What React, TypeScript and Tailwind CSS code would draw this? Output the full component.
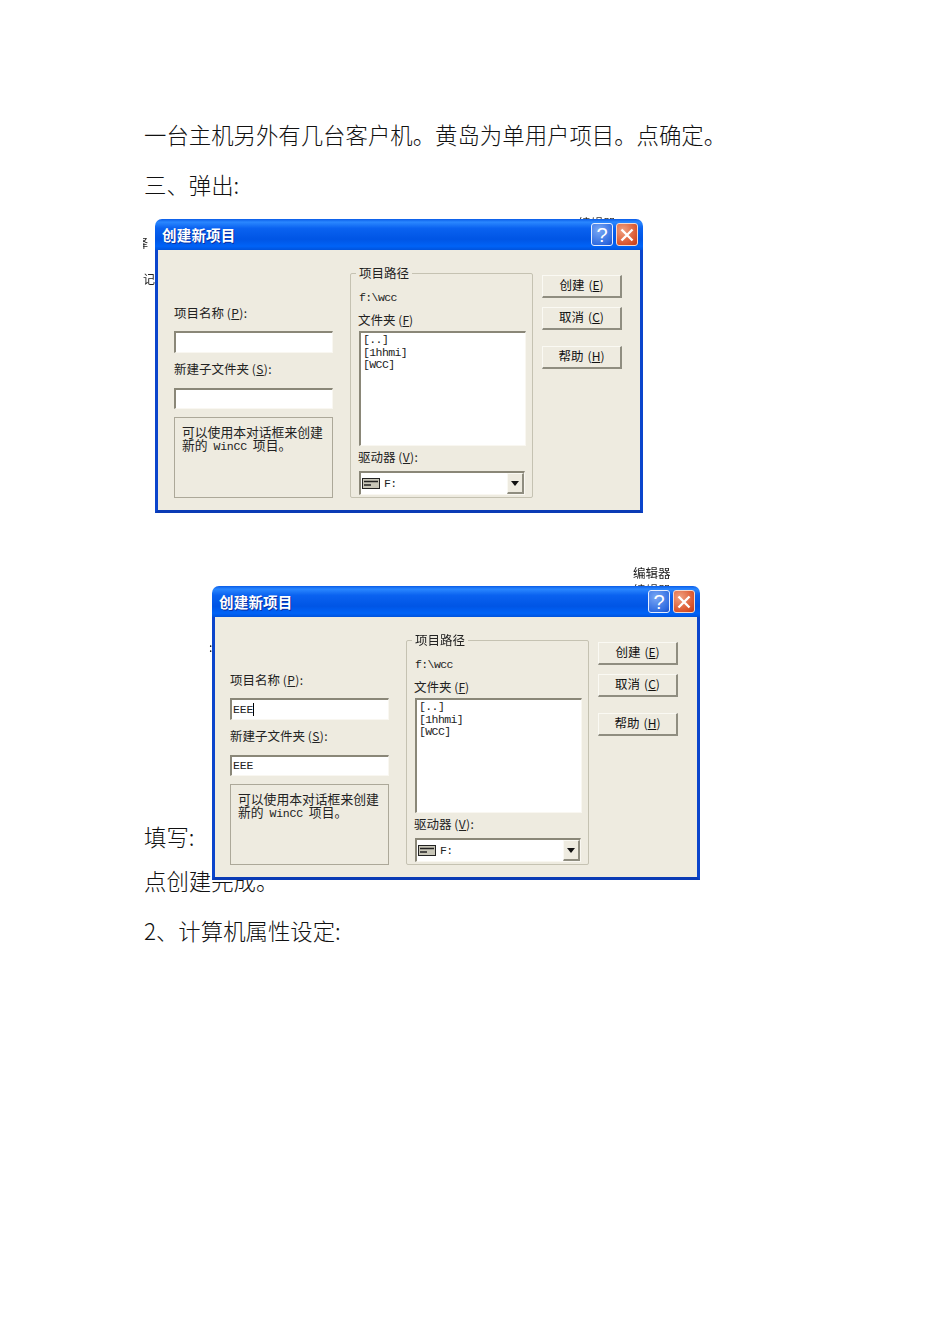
const sans = "font-['Noto_Sans_CJK_SC',sans-serif]";

function Sunken({ className = "", children }: { className?: string; children?: React.ReactNode }) {
  return (
    <div className={`border-t-2 border-l-2 border-r border-b border-t-[#8a8778] border-l-[#8a8778] border-r-[#f9f7f1] border-b-[#f9f7f1] bg-white ${className}`}>
      {children}
    </div>
  );
}

function Btn({ label, k, className = "" }: { label: string; k: string; className?: string }) {
  return (
    <div className={`h-[23px] w-[80px] pb-[2px] flex items-center justify-center gap-[4px] bg-[#eeebe0] border-t border-l border-t-[#faf9f3] border-l-[#faf9f3] border-r-2 border-b-2 border-r-[#8f8d80] border-b-[#8f8d80] text-[12.5px] text-[#111] ${className}`}>
      <span>{label}</span>
      <span className="text-[12px]">(<u>{k}</u>)</span>
    </div>
  );
}

function Label({ children, className = "" }: { children: React.ReactNode; className?: string }) {
  return <div className={`h-[18px] leading-[18px] text-[12.5px] text-[#222] whitespace-nowrap ${className}`}>{children}</div>;
}

function Dialog({ value, second }: { value?: string; second?: boolean }) {
  const mono = "font-['Liberation_Mono',monospace] text-[11.5px] tracking-[-0.6px]";
  return (
    <div className={`relative w-[488px] h-[294px] flex flex-col ${sans}`}>
      {second ? (
        <>
          <span className="absolute left-[421px] top-[-21px] text-[12.5px] leading-[16px] text-[#222] whitespace-nowrap">编辑器</span>
          <span className="absolute left-[421px] top-[-3px] h-[3px] overflow-hidden text-[12.5px] leading-[14px] text-[#333] whitespace-nowrap">编辑器</span>
          <span className="absolute left-[-3px] top-[54px] text-[12px] leading-[14px] w-[3px] overflow-hidden text-black">:</span>
        </>
      ) : (
        <>
          <span className="absolute left-[423px] top-[-2px] h-[2px] overflow-hidden text-[12.5px] leading-[12px] text-[#333] whitespace-nowrap">编辑器</span>
          <span className="absolute left-[-12px] top-[16px] w-[5px] h-[15px] overflow-hidden text-[12px] leading-[15px] text-[#222] flex justify-end">择</span>
          <span className="absolute left-[-12px] top-[52px] w-[12px] h-[15px] overflow-hidden text-[12px] leading-[15px] text-[#222]">记</span>
        </>
      )}
      <div className="h-[31px] shrink-0 rounded-t-[7px] bg-[linear-gradient(180deg,#0a5ce8_0%,#2a87ff_10%,#0a62f0_30%,#0055e5_65%,#0063f7_88%,#0053dc_100%)] flex items-center pl-[7px] pr-[5px]">
        <span className="text-white text-[14.5px] font-bold tracking-[0.2px] [text-shadow:1px_1px_0_#0a2fa0]">创建新项目</span>
        <div className="ml-auto flex gap-[3px]">
          <div className="w-[22px] h-[23px] rounded-[3px] border border-[#e6eeff] bg-[radial-gradient(circle_at_35%_30%,#7aa8f5,#2f6be0_75%,#1d4fc8)] flex items-center justify-center text-white text-[20px] font-['Liberation_Sans',sans-serif]">?</div>
          <div className="w-[22px] h-[23px] rounded-[3px] border border-[#f3d9cf] bg-[radial-gradient(circle_at_30%_30%,#f0a080,#dc5a32_65%,#c23a18)] flex items-center justify-center">
            <svg width="16" height="16" viewBox="0 0 16 16"><path d="M2.5 2.5 L13.5 13.5 M13.5 2.5 L2.5 13.5" stroke="#fff" strokeWidth="2.4" /></svg>
          </div>
        </div>
      </div>
      <div className={`flex-1 flex bg-[#eeebe0] border-x-[3px] border-b-[3px] border-[#0b45cc] border-b-[#0a3bb5] ${second ? "pl-[15px]" : "pl-[16px]"}`}>
        <div className="w-[159px] pt-[54px] flex flex-col">
          <Label>项目名称 <span className="text-[12px] tracking-[0.4px]">(<u>P</u>):</span></Label>
          <Sunken className={`mt-[9px] h-[22px] pl-[1px] flex items-center ${mono}`}>
            {value && <span className="text-[#222] tracking-[-0.2px]">{value}</span>}
            {value && <span className="w-px h-[13px] bg-black" />}
          </Sunken>
          <Label className="mt-[7px]">新建子文件夹 <span className="text-[12px] tracking-[0.4px]">(<u>S</u>):</span></Label>
          <Sunken className={`mt-[10px] h-[21px] pl-[1px] flex items-center ${mono}`}>
            {value && <span className="text-[#222] tracking-[-0.2px]">{value}</span>}
          </Sunken>
          <div className="mt-[8px] h-[81px] border border-[#aca899] pl-[7px] pr-[2px] pt-[7px] text-[12.8px] leading-[13px] text-[#222] whitespace-nowrap">
            可以使用本对话框来创建<br />新的 <span className="mx-[3px] font-['Liberation_Mono',monospace] text-[11.5px] tracking-[-0.2px]">WinCC</span> 项目。
          </div>
        </div>
        <div className="relative ml-[17px] mt-[23px] w-[183px] h-[225px] border border-[#c5c2b2] rounded-[2px] px-[8px] pt-[16px]">
          <span className="absolute left-[5px] top-[-9px] bg-[#eeebe0] px-[3px] text-[12.5px] leading-[16px] text-[#222]">项目路径</span>
          <div className={`h-[16px] leading-[16px] text-[#222] ${mono}`}>f:\wcc</div>
          <div className="mt-[6px] -ml-px h-[16px] leading-[16px] text-[12.5px] text-[#222] whitespace-nowrap">文件夹 <span className="text-[12px]">(<u>F</u>)</span></div>
          <Sunken className={`mt-[3px] h-[115px] w-[167px] pl-[2px] pt-[1px] leading-[12.5px] text-[#222] ${mono}`}>
            <div>[..]</div>
            <div>[1hhmi]</div>
            <div>[WCC]</div>
          </Sunken>
          <div className="mt-[3px] -ml-px h-[16px] leading-[16px] text-[12.5px] text-[#222] whitespace-nowrap">驱动器 <span className="text-[12px] tracking-[0.4px]">(<u>V</u>):</span></div>
          <Sunken className="mt-[6px] h-[24px] w-[166px] flex items-center pl-[1px]">
            <svg width="18" height="11" viewBox="0 0 18 11" className="shrink-0">
              <rect x="0.5" y="0.5" width="17" height="10" fill="#c8c6b8" stroke="#222" />
              <path d="M2 3.5H16M2 7H9" stroke="#222" strokeWidth="1.5" />
            </svg>
            <span className={`ml-[4px] text-[#222] ${mono}`}>F:</span>
            <div className="ml-auto w-[17px] h-[21px] bg-[#eeebe0] border-t border-l border-[#faf9f3] border-r-2 border-b-2 border-r-[#8f8d80] border-b-[#8f8d80] flex items-center justify-center">
              <svg width="8" height="5" viewBox="0 0 8 5"><path d="M0 0H8L4 5Z" fill="#111" /></svg>
            </div>
          </Sunken>
        </div>
        <div className="ml-[9px] mt-[25px] flex flex-col">
          <Btn label="创建" k="E" />
          <Btn label="取消" k="C" className="mt-[9px]" />
          <Btn label="帮助" k="H" className="mt-[16px]" />
        </div>
      </div>
    </div>
  );
}

export default function App() {
  const line = "h-[36px] leading-[32px] text-[22.4px] text-[#111] font-light whitespace-nowrap";
  return (
    <div className={`w-[950px] h-[1344px] bg-white pt-[118px] pl-[144px] overflow-hidden ${sans}`}>
      <p className={line}>一台主机另外有几台客户机。黄岛为单用户项目。点确定。</p>
      <p className={`${line} mt-[14px]`}>三、弹出:</p>
      <div className="mt-[15px] ml-[11px] blur-[0.4px]">
        <Dialog />
      </div>
      <div className="relative mt-[307px]">
        <p className={line}>填写:</p>
        <p className={`${line} mt-[8px]`}>点创建完成。</p>
        <p className={`${line} mt-[14px]`}>2、计算机属性设定:</p>
        <div className="absolute left-[68px] top-[-234px] blur-[0.4px]">
          <Dialog value="EEE" second />
        </div>
      </div>
    </div>
  );
}
